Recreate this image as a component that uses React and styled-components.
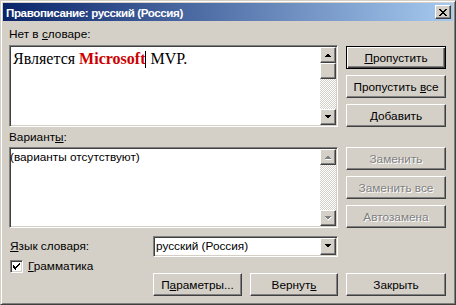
import React from 'react';
import styled, { createGlobalStyle, css } from 'styled-components';

const GlobalStyle = createGlobalStyle`
  html, body {
    margin: 0;
    padding: 0;
    background: #d4d0c8;
  }
  body {
    font-family: "Liberation Sans", Arial, sans-serif;
    font-size: 11.8px;
    color: #000;
  }
`;

const raised = css`
  border: 1px solid;
  border-color: #fff #404040 #404040 #fff;
  box-shadow: inset -1px -1px #808080, inset 1px 1px #d4d0c8;
  background: #d4d0c8;
`;

const sunken = css`
  border: 1px solid;
  border-color: #808080 #fff #fff #808080;
  box-shadow: inset 1px 1px #404040, inset -1px -1px #d4d0c8;
  background: #fff;
`;

const Window = styled.div`
  box-sizing: border-box;
  width: 456px;
  height: 305px;
  padding: 2px;
  border: 1px solid;
  border-color: #d4d0c8 #404040 #404040 #d4d0c8;
  box-shadow: inset 1px 1px #fff, inset -1px -1px #808080;
  background: #d4d0c8;
  display: flex;
  flex-direction: column;
`;

const TitleBar = styled.div`
  height: 18px;
  display: flex;
  align-items: center;
  justify-content: space-between;
  padding: 0 2px 0 3px;
  background: linear-gradient(to right, #0a246a, #a6caf0);
`;

const Title = styled.span`
  color: #fff;
  font-weight: bold;
  font-size: 11.6px;
  letter-spacing: -0.4px;
  white-space: nowrap;
`;

const CloseButton = styled.div`
  ${raised};
  box-sizing: border-box;
  width: 16px;
  height: 14px;
  display: flex;
  align-items: center;
  justify-content: center;
`;

const Body = styled.div`
  display: grid;
  grid-template-columns: 144px 193px 100px;
  grid-template-rows: 24px 82px 20px 81px 29px 16px 23px;
  padding: 0 7px 0 6px;
`;

const Label = styled.div`
  grid-column: 1 / 3;
  align-self: end;
  padding-bottom: ${p => p.$pb || 4}px;
  line-height: 14px;
  white-space: nowrap;
`;

const U = styled.span`
  text-decoration: underline;
  text-underline-offset: 1px;
`;

const ListBox = styled.div`
  ${sunken};
  grid-column: 1 / 3;
  box-sizing: border-box;
  width: 329px;
  display: flex;
`;

const ListContent = styled.div`
  flex: 1;
  padding: ${p => p.$pad};
  overflow: hidden;
  white-space: nowrap;
`;

const SentenceText = styled.div`
  font-family: "Liberation Serif", "Times New Roman", serif;
  font-size: 16px;
  line-height: 18px;
`;

const Unknown = styled.span`
  color: #cc0000;
  font-weight: bold;
`;

const Caret = styled.span`
  display: inline-block;
  width: 1px;
  height: 17px;
  background: #000;
  vertical-align: -4px;
`;

const Scrollbar = styled.div`
  width: 16px;
  margin: 1px 1px 1px 0;
  display: flex;
  flex-direction: column;
`;

const ScrollButton = styled.div`
  ${raised};
  box-sizing: border-box;
  width: 16px;
  height: 16px;
  display: flex;
  align-items: center;
  justify-content: center;
`;

const Track = styled.div`
  flex: 1;
  background: repeating-conic-gradient(#fff 0 25%, #d4d0c8 0 50%) 0 0 / 2px 2px;
`;

const ButtonStack = styled.div`
  grid-column: 3;
  display: flex;
  flex-direction: column;
  gap: 6px;
  padding-top: ${p => p.$top}px;
`;

const Button = styled.div`
  box-sizing: border-box;
  width: ${p => p.$w || 100}px;
  height: 23px;
  display: flex;
  align-items: center;
  justify-content: center;
  white-space: nowrap;
  ${p => p.$default
    ? css`
        border: 1px solid #000;
        background: #d4d0c8;
        box-shadow: inset 1px 1px #fff, inset -1px -1px #404040, inset -2px -2px #808080;
      `
    : raised};
  ${p => p.$disabled && css`
    color: #808080;
    text-shadow: 1px 1px #fff;
  `}
`;

const LangLabel = styled.div`
  grid-column: 1;
  grid-row: 5;
  align-self: end;
  height: 21px;
  line-height: 21px;
  padding-left: 1px;
`;

const Combo = styled.div`
  ${sunken};
  grid-column: 2;
  grid-row: 5;
  align-self: end;
  box-sizing: border-box;
  width: 185px;
  height: 21px;
  display: flex;
`;

const ComboText = styled.div`
  flex: 1;
  padding-left: 2px;
  line-height: 19px;
`;

const ComboButton = styled(ScrollButton)`
  height: 17px;
  margin: 1px 1px 1px 0;
`;

const CheckRow = styled.div`
  grid-column: 1;
  grid-row: 6 / 8;
  display: flex;
  align-items: flex-start;
  gap: 5px;
  padding: 3px 0 0 1px;
`;

const CheckBox = styled.div`
  ${sunken};
  box-sizing: border-box;
  width: 13px;
  height: 13px;
  display: flex;
  align-items: center;
  justify-content: center;
`;

const CheckText = styled.span`
  line-height: 13px;
`;

const BottomButtons = styled.div`
  grid-column: 2;
  grid-row: 7;
  display: flex;
  gap: 8px;
`;

const BottomRight = styled.div`
  grid-column: 3;
  grid-row: 7;
`;

const Arrow = ({ dir, disabled }) => {
  const pts = dir === 'up' ? '0,4 7,4 3.5,0.5' : '0,0 7,0 3.5,3.5';
  return (
    <svg width="8" height="5" viewBox="0 0 8 5">
      {disabled && <polygon points={pts} fill="#fff" transform="translate(1,1)" />}
      <polygon points={pts} fill={disabled ? '#808080' : '#000'} shapeRendering="crispEdges" />
    </svg>
  );
};

const ScrollBarView = ({ disabled }) => (
  <Scrollbar>
    <ScrollButton><Arrow dir="up" disabled={disabled} /></ScrollButton>
    {!disabled && <ScrollButton />}
    <Track />
    <ScrollButton><Arrow dir="down" disabled={disabled} /></ScrollButton>
  </Scrollbar>
);

const App = () => (
  <>
    <GlobalStyle />
    <Window>
      <TitleBar>
        <Title>Правописание: русский (Россия)</Title>
        <CloseButton>
          <svg width="8" height="7" viewBox="0 0 8 7" shapeRendering="crispEdges">
            <path d="M0 0h2v1h-2zM6 0h2v1h-2zM1 1h2v1h-2zM5 1h2v1h-2zM2 2h4v1h-4zM3 3h2v1h-2zM2 4h4v1h-4zM1 5h2v1h-2zM5 5h2v1h-2zM0 6h2v1h-2zM6 6h2v1h-2z" fill="#000" />
          </svg>
        </CloseButton>
      </TitleBar>
      <Body>
        <Label>Нет в <U>с</U>ловаре:</Label>
        <ListBox>
          <ListContent $pad="4px 0 0 3px">
            <SentenceText>
              Является <Unknown>Microsoft</Unknown><Caret /> MVP.
            </SentenceText>
          </ListContent>
          <ScrollBarView />
        </ListBox>
        <ButtonStack $top={1}>
          <Button $default><span><U>П</U>ропустить</span></Button>
          <Button><span>Пропустить <U>в</U>се</span></Button>
          <Button><span><U>Д</U>обавить</span></Button>
        </ButtonStack>
        <Label $pb={3}>Вариант<U>ы</U>:</Label>
        <ListBox>
          <ListContent $pad="2px 0 0 0">(варианты отсутствуют)</ListContent>
          <ScrollBarView disabled />
        </ListBox>
        <ButtonStack $top={0}>
          <Button $disabled>Заменить</Button>
          <Button $disabled>Заменить все</Button>
          <Button $disabled>Автозамена</Button>
        </ButtonStack>
        <LangLabel><U>Я</U>зык словаря:</LangLabel>
        <Combo>
          <ComboText>русский (Россия)</ComboText>
          <ComboButton><Arrow dir="down" /></ComboButton>
        </Combo>
        <CheckRow>
          <CheckBox>
            <svg width="7" height="7" viewBox="0 0 7 7" shapeRendering="crispEdges">
              <path d="M6 0h1v1h-1zM5 1h1v1h-1zM0 2h1v1h-1zM4 2h2v1h-2zM0 3h2v1h-2zM3 3h2v1h-2zM0 4h4v1h-4zM1 5h2v1h-2zM2 6h1v1h-1zM6 1h1v1h-1zM5 2h1v1h-1z" fill="#000" />
            </svg>
          </CheckBox>
          <CheckText><U>Г</U>рамматика</CheckText>
        </CheckRow>
        <BottomButtons>
          <Button $w={89}><span>П<U>а</U>раметры...</span></Button>
          <Button $w={88}><span>Вернут<U>ь</U></span></Button>
        </BottomButtons>
        <BottomRight>
          <Button>Закрыть</Button>
        </BottomRight>
      </Body>
    </Window>
  </>
);

export default App;
